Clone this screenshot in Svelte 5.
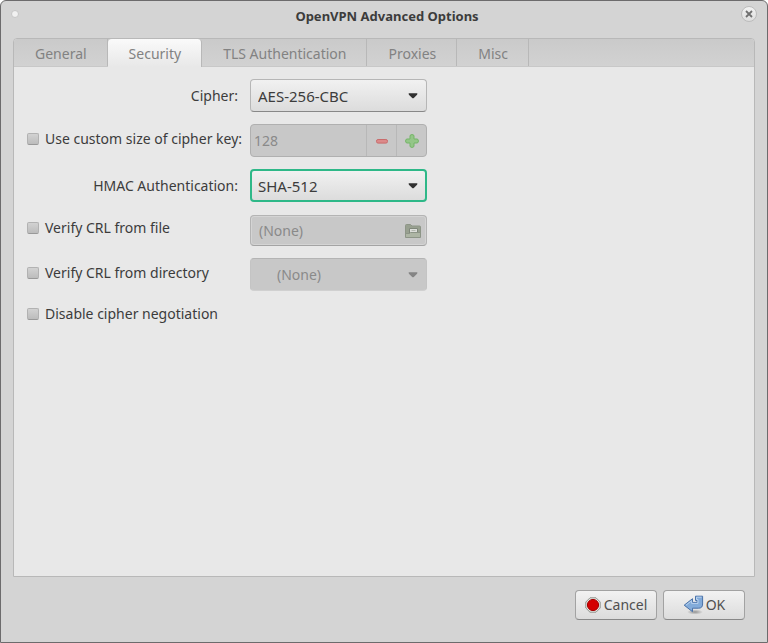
<script>
  const tabs = ['General', 'Security', 'TLS Authentication', 'Proxies', 'Misc'];
  let active = $state('Security');
  let cipher = $state('AES-256-CBC');
  let hmac = $state('SHA-512');
  let customKey = $state(false);
  let keySize = $state(128);
  let crlFile = $state(false);
  let crlDir = $state(false);
  let noNegotiation = $state(false);
</script>

{#snippet arrow()}
  <svg class="arrow" width="10" height="6" viewBox="0 0 10 6" aria-hidden="true">
    <path d="M.6 .3H9.4L9.1 1.7 5.8 5Q5 5.7 4.2 5L.9 1.7Z" fill="currentColor" />
  </svg>
{/snippet}

<div class="dialog" role="dialog" aria-labelledby="title">
  <header>
    <button class="dot" aria-label="Window menu"></button>
    <h1 id="title">OpenVPN Advanced Options</h1>
    <button class="close" aria-label="Close">
      <svg width="8" height="8" viewBox="0 0 8 8">
        <path d="M1 1L7 7M7 1L1 7" stroke="#707070" stroke-width="1.8" />
      </svg>
    </button>
  </header>

  <section class="notebook">
    <div class="tabs" role="tablist">
      {#each tabs as tab}
        <button role="tab" class="tab" class:active={tab === active} aria-selected={tab === active} onclick={() => (active = tab)}>{tab}</button>
      {/each}
    </div>

    <div class="panel" role="tabpanel">
      <label class="caption" for="cipher">Cipher:</label>
      <div class="combo">
        <select id="cipher" bind:value={cipher}>
          <option>AES-256-CBC</option>
          <option>AES-128-CBC</option>
        </select>
        {@render arrow()}
      </div>

      <label class="check"><input type="checkbox" bind:checked={customKey} />Use custom size of cipher key:</label>
      <div class="spin">
        <input type="text" aria-label="Cipher key size" bind:value={keySize} disabled={!customKey} />
        <button aria-label="Decrease" disabled={!customKey}>
          <svg width="14" height="14" viewBox="0 0 14 14">
            <rect x="1.5" y="5.5" width="11" height="3.6" rx="1.6" fill="#dc8a8a" stroke="#c96b6b" />
          </svg>
        </button>
        <button aria-label="Increase" disabled={!customKey}>
          <svg width="14" height="14" viewBox="0 0 14 14">
            <path d="M5 2Q5 .6 7 .6T9 2V5H12Q13.4 5 13.4 7T12 9H9V12Q9 13.4 7 13.4T5 12V9H2Q.6 9 .6 7T2 5H5Z" fill="#94c688" stroke="#75b568" />
          </svg>
        </button>
      </div>

      <label class="caption" for="hmac">HMAC Authentication:</label>
      <div class="combo focused">
        <select id="hmac" bind:value={hmac}>
          <option>SHA-512</option>
          <option>SHA-256</option>
        </select>
        {@render arrow()}
      </div>

      <label class="check"><input type="checkbox" bind:checked={crlFile} />Verify CRL from file</label>
      <button class="file" disabled={!crlFile}>
        <span>(None)</span>
        <svg width="18" height="16" viewBox="0 0 18 16">
          <path d="M1.5 13.5V2.5Q1.5 1.5 2.5 1.5H6.5L8 3H15.5Q16.5 3 16.5 4V13.5Z" fill="#98a090" stroke="#8d9587" />
          <path d="M5.5 5.5H13.5V10.5H5.5Z" fill="#dcdeda" stroke="#7f877a" />
          <path d="M7.5 7.5H11.5" stroke="#b4b8b0" />
          <path d="M1.5 10.5H5.5L6.5 9.5H16.5V14.5H1.5Z" fill="#adb5a4" stroke="#8d9587" />
        </svg>
      </button>

      <label class="check"><input type="checkbox" bind:checked={crlDir} />Verify CRL from directory</label>
      <div class="combo off">
        <select aria-label="CRL directory" disabled={!crlDir}>
          <option>(None)</option>
        </select>
        {@render arrow()}
      </div>

      <label class="check last"><input type="checkbox" bind:checked={noNegotiation} />Disable cipher negotiation</label>
    </div>
  </section>

  <footer>
    <button class="action">
      <svg width="16" height="16" viewBox="0 0 16 16">
        <path d="M5 .8H11L15.2 5V11L11 15.2H5L.8 11V5Z" fill="#e4e5e1" stroke="#92948f" />
        <circle cx="8" cy="8" r="5.6" fill="#d40000" stroke="#a40000" />
      </svg>
      Cancel
    </button>
    <button class="action ok">
      <svg width="22" height="20" viewBox="0 0 22 20">
        <defs>
          <linearGradient id="blue" x1="0" y1="0" x2="0" y2="1">
            <stop offset="0" stop-color="#7fa8d8" />
            <stop offset="1" stop-color="#86aedb" />
          </linearGradient>
          <radialGradient id="shade">
            <stop offset="0" stop-color="#000" stop-opacity=".35" />
            <stop offset="1" stop-color="#000" stop-opacity="0" />
          </radialGradient>
        </defs>
        <ellipse cx="12" cy="17" rx="8" ry="2.6" fill="url(#shade)" />
        <path d="M1.2 10.2L9.5 3.7V7.4H14V5.5H12.5V1.2H19.6V9Q19.6 13.2 15.6 13.2H9.5V16.7Z" fill="url(#blue)" stroke="#4a72a8" stroke-linejoin="round" />
        <path d="M3 10.2L8.6 5.8V8.4H15V4.5H13.5V2.2H18.6" fill="none" stroke="#b9d2ee" />
      </svg>
      OK
    </button>
  </footer>
</div>

<style>
  :global(body) {
    margin: 0;
    background: #fff;
  }
  .dialog {
    box-sizing: border-box;
    min-height: 100vh;
    display: flex;
    flex-direction: column;
    padding: 0 12px 22px;
    border: 1px solid #6c6b6c;
    border-radius: 6px 6px 0 0;
    background: #d4d4d4;
    color: #3c3c3c;
    font: 14px/20px 'Noto Sans', sans-serif;
  }
  button,
  input,
  select {
    box-sizing: border-box;
    margin: 0;
    font: inherit;
    color: inherit;
  }
  header {
    display: flex;
    align-items: flex-start;
    height: 32px;
    padding-top: 5px;
    box-sizing: border-box;
    margin: 0 -2px 5px;
  }
  h1 {
    flex: 1;
    margin: 0;
    padding-left: 14px;
    text-align: center;
    font-size: 13px;
    font-weight: 700;
  }
  .dot,
  .close {
    padding: 0;
    border: 1px solid #bcbcbc;
    border-radius: 50%;
    background: #f1f1f1;
  }
  .dot {
    width: 8px;
    height: 8px;
    margin-top: 4px;
    border-color: #c6c6c6;
  }
  .close {
    display: grid;
    place-items: center;
    width: 16px;
    height: 16px;
    background: linear-gradient(#f2f2f2, #dedede);
  }
  .notebook {
    flex: 1;
    display: flex;
    flex-direction: column;
    border: 1px solid #b8b8b8;
    border-radius: 4px 4px 0 0;
    background: #e8e8e8;
  }
  .tabs {
    display: flex;
    height: 28px;
    box-sizing: border-box;
    border-bottom: 1px solid #c8c8c8;
    border-radius: 3px 3px 0 0;
    background: linear-gradient(#cacaca, #d2d2d2);
  }
  .tab {
    height: 27px;
    padding: 3px 20px 0 21px;
    border: 0;
    border-right: 1px solid #b8b8b8;
    background: none;
    color: #828282;
  }
  .tab.active {
    height: 28px;
    padding-bottom: 1px;
    border-radius: 4px 4px 0 0;
    background: linear-gradient(#fafafa, #e8e8e8);
  }
  .panel {
    display: grid;
    grid-template-columns: 211px 177px;
    grid-template-rows: 33px 33px 33px 32px 33px auto;
    column-gap: 12px;
    row-gap: 12px;
    align-items: center;
    padding: 12px 13px;
  }
  .caption {
    text-align: right;
  }
  .check {
    display: flex;
    align-items: center;
    gap: 6px;
    padding-bottom: 4px;
    white-space: nowrap;
  }
  .last {
    padding: 1px 0 0;
  }
  .check input {
    appearance: none;
    flex: none;
    width: 12px;
    height: 12px;
    border: 1px solid #b2b2b2;
    border-bottom-color: #999;
    border-radius: 2px;
    background: linear-gradient(#d2d2d2, #bcbcbc);
  }
  .combo {
    position: relative;
    height: 33px;
  }
  select {
    appearance: none;
    width: 100%;
    height: 33px;
    padding: 0 24px 0 7px;
    border: 1px solid #b6b6b6;
    border-bottom-color: #888;
    border-radius: 4px;
    outline: 0;
    background: linear-gradient(#f1f1f1, #dcdcdc);
    font-size: 15px;
  }
  .arrow {
    position: absolute;
    top: 14px;
    right: 9px;
    color: #303030;
    pointer-events: none;
  }
  .focused select {
    padding-left: 6px;
    border: 2px solid #2eb888;
  }
  .off select {
    padding-left: 26px;
    border-color: #b4b4b4 #c4c4c4 #d0d0d0;
    background: #c8c8c8;
    color: #8a8a8a;
    font-size: 14px;
    opacity: 1;
  }
  .off .arrow {
    color: #858585;
  }
  .spin {
    display: flex;
    box-sizing: border-box;
    height: 33px;
    border: 1px solid #b0b0b0;
    border-radius: 4px;
    background: #c8c8c8;
  }
  .spin input {
    flex: 1;
    min-width: 0;
    padding: 0 3px;
    border: 0;
    background: none;
    color: #8a8a8a;
  }
  .spin button {
    display: grid;
    place-items: center;
    width: 30px;
    padding: 0;
    border: 0;
    border-left: 1px solid #b8b8b8;
    background: none;
  }
  .file {
    display: flex;
    align-items: center;
    justify-content: space-between;
    align-self: end;
    height: 31px;
    padding: 0 4px 0 8px;
    border: 1px solid #b4b4b4;
    border-bottom-color: #a4a4a4;
    border-radius: 4px;
    background: #c8c8c8;
    box-shadow: inset 0 0 0 1px #d4d4d4;
    color: #8a8a8a;
  }
  footer {
    display: flex;
    justify-content: flex-end;
    gap: 6px;
    margin-top: 13px;
    padding-right: 10px;
  }
  .action {
    display: flex;
    align-items: center;
    justify-content: center;
    gap: 3px;
    width: 82px;
    height: 30px;
    padding: 0;
    border: 1px solid #a2a2a2;
    border-bottom-color: #888;
    border-radius: 4px;
    background: linear-gradient(#f2f2f2, #dcdcdc);
    color: #505050;
  }
  .ok {
    gap: 1px;
  }
</style>
